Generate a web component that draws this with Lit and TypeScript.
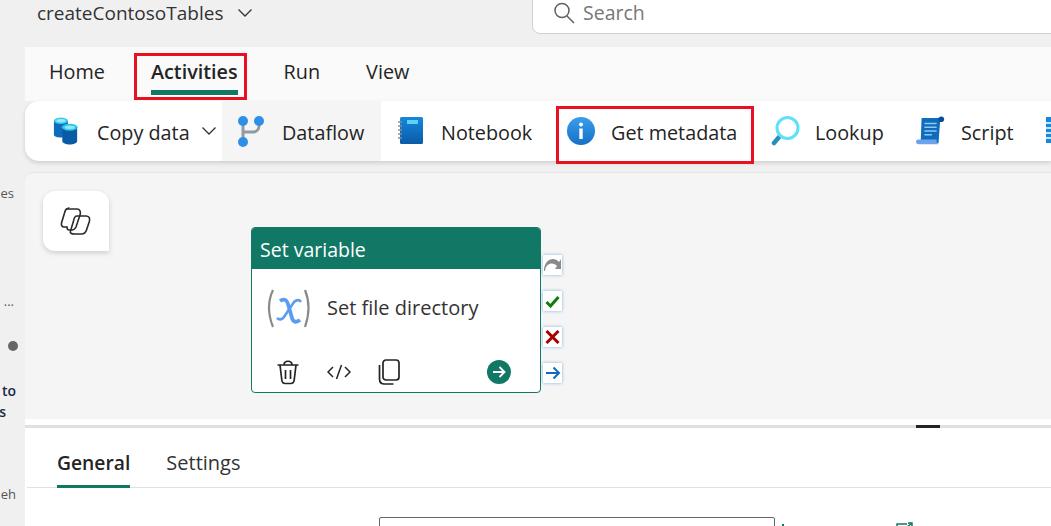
import { LitElement, css, html, svg } from "lit";
import { customElement } from "lit/decorators.js";

const icons = {
  copy: svg`<svg width="26" height="30" viewBox="0 0 28 32">
    <path d="M1 5v15c0 2 4 3 7 3s8-1 8-3V5z" fill="#0f6cbd"/><ellipse cx="8.500" cy="5" rx="7.500" ry="3.500" fill="#3ccbf4"/><ellipse cx="8.500" cy="5" rx="5" ry="1.800" fill="#9be8fa"/>
    <path d="M10 12v15c0 2 4 3.500 8 3.500s8-1.500 8-3.500V12z" fill="#0a5ba6"/><ellipse cx="18" cy="12" rx="8.500" ry="3.800" fill="#2fc4ea"/><ellipse cx="18" cy="12" rx="5.500" ry="2" fill="#8fe6f8"/>
  </svg>`,
  flow: svg`<svg width="26" height="31" viewBox="0 0 26 31">
    <path d="M5 5v21M21 8v2c0 4-3 6-6 6H5" fill="none" stroke="#8f9aa3" stroke-width="3"/>
    <circle cx="5" cy="5" r="5" fill="#2f8fe8"/><circle cx="21" cy="5" r="5" fill="#2f8fe8"/><circle cx="5" cy="26" r="5" fill="#2f8fe8"/>
  </svg>`,
  book: svg`<svg width="26" height="30" viewBox="0 0 26 30">
    <defs><linearGradient id="b" x1="0" y1="0" x2="0" y2="1"><stop offset="0" stop-color="#1a86dc"/><stop offset="1" stop-color="#0a5ba6"/></linearGradient></defs>
    <rect x="2" y="1" width="23" height="27" rx="1.500" fill="url(#b)"/>
    <rect x="9" y="4" width="11" height="4" fill="#5ad4f6"/>
    <path d="M0 6h4M0 10h4M0 14h4M0 18h4M0 22h4" stroke="#8a8f96" stroke-width="1.500"/>
  </svg>`,
  info: svg`<svg width="28" height="28" viewBox="0 0 28 28">
    <defs><linearGradient id="i" x1="0" y1="0" x2="0" y2="1"><stop offset="0" stop-color="#3a9eea"/><stop offset="1" stop-color="#1570c8"/></linearGradient></defs>
    <circle cx="14" cy="14" r="14" fill="url(#i)"/><circle cx="14" cy="7.500" r="2" fill="#fff"/><rect x="12.300" y="11.500" width="3.400" height="10.500" fill="#fff"/>
  </svg>`,
  lens: svg`<svg width="29" height="30" viewBox="0 0 29 30">
    <path d="M9 20L3 27" stroke="#2a8fb8" stroke-width="4.500" stroke-linecap="round"/>
    <circle cx="16.500" cy="12" r="10.500" fill="#fff" stroke="#5fe0fb" stroke-width="3"/>
  </svg>`,
  script: svg`<svg width="31" height="30" viewBox="0 0 31 32">
    <path d="M6 2h20l-2 27H5z" fill="#0f6cbd"/><circle cx="27" cy="3.500" r="3" fill="#0a4f96"/>
    <path d="M9 8h13M9 12h13M9 16h13M9 20h8" stroke="#8cc8f2" stroke-width="1.500"/>
    <path d="M2 25h20c0 1 0 5 2 5H3c-2 0-3-1-3-2.500S1 25 2 25z" fill="#6ba4ec"/>
  </svg>`,
  pipeline: svg`<svg width="20" height="30" viewBox="0 0 20 30">
    <rect width="20" height="26" y="1" fill="#1a86dc"/><path d="M0 7h20M0 12h20M0 17h20M0 22h20" stroke="#bfe6fb" stroke-width="2"/>
  </svg>`,
  copilot: svg`<svg width="50" height="35" viewBox="0 0 50 35" fill="none" stroke="#2a2a2a" stroke-width="1.600">
    <path d="M16 5h10c3 0 4 3 3 6l-4 12c-1 2-2 3-4 3h-3c-1 0-2-1-2-3h-3c-2 0-3-2-2.500-4l3-10c.6-3 1-4 3-4.500z"/>
    <path d="M26 12h9c3 0 4 2 3.500 5l-3 9c-.7 2-2 4-5 4h-7c-3 0-5-1-4-3l3-10c.5-3 2-5 3.500-5z"/>
  </svg>`,
  variable: svg`<svg width="65" height="55" viewBox="0 0 65 55" fill="none">
    <path d="M15 10Q7 27 15 47M47 10Q54 27 47 47" stroke="#8a8a8a" stroke-width="2.200"/>
    <path d="M22 21c4-3 7-1 8 3l4 14c1 4 4 5 8 2" stroke="#5a9cf0" stroke-width="3.800"/>
    <path d="M43 22c-2-3-5-2-7 0L26 37c-2 3-5 3-7 1" stroke="#5a9cf0" stroke-width="2.600"/>
  </svg>`,
  trash: svg`<svg width="24" height="26" viewBox="0 0 24 26" fill="none" stroke="#242424" stroke-width="1.700">
    <path d="M1.500 6h21M8 6c0-5 8-5 8 0M4 6l1.800 15c.2 2 1.500 3.500 3.500 3.500h5.400c2 0 3.300-1.500 3.500-3.500L20 6M9.500 11v9M14.500 11v9"/>
  </svg>`,
  code: svg`<svg width="24" height="16" viewBox="0 0 24 16" fill="none" stroke="#242424" stroke-width="1.500">
    <path d="M6 3L1 8l5 5M18 3l5 5-5 5M14.500 1l-5 14"/>
  </svg>`,
  dup: svg`<svg width="22" height="26" viewBox="0 0 22 26" fill="none" stroke="#242424" stroke-width="1.700">
    <rect x="5" y="1" width="16" height="20" rx="3"/><path d="M1.500 6v14c0 3 2 5 5 5h9"/>
  </svg>`,
  go: svg`<svg width="24" height="24" viewBox="0 0 24 24">
    <circle cx="12" cy="12" r="12" fill="#117865"/><path d="M6 12h11M12.500 7l5 5-5 5" fill="none" stroke="#fff" stroke-width="1.800"/>
  </svg>`,
  skip: svg`<svg width="17" height="14" viewBox="0 0 17 14"><path d="M1 13c1-9 9-9 12-5l-2 3h6V1l-2 3C10-2 0 1 0 13z" fill="#8a8a8a"/></svg>`,
  ok: svg`<svg width="15" height="13" viewBox="0 0 15 13"><path d="M1.500 7l4 4 8-9" fill="none" stroke="#107c10" stroke-width="3"/></svg>`,
  fail: svg`<svg width="15" height="14" viewBox="0 0 15 14"><path d="M1.500 1l12 12M13.500 1l-12 12" fill="none" stroke="#a80000" stroke-width="3"/></svg>`,
  next: svg`<svg width="16" height="14" viewBox="0 0 16 14"><path d="M1 7h13M8.500 1.500L14 7l-5.500 5.500" fill="none" stroke="#0f6cbd" stroke-width="2"/></svg>`,
  chevron: svg`<svg width="16" height="10" viewBox="0 0 16 10"><path d="M1.500 1.500L8 8l6.500-6.500" fill="none" stroke="#333" stroke-width="1.300"/></svg>`,
  search: svg`<svg width="22" height="22" viewBox="0 0 22 22" fill="none" stroke="#616161" stroke-width="1.500"><circle cx="9" cy="8.500" r="7"/><path d="M14 14l7 7"/></svg>`,
  open: svg`<svg width="18" height="10" viewBox="0 0 18 10" fill="none" stroke="#117865" stroke-width="1.500"><path d="M1 10V2h10M10 6l6-5M12 1h4v4"/></svg>`,
};

const tools = [
  { label: "Copy data", icon: icons.copy, cls: "copy" },
  { label: "Dataflow", icon: icons.flow, cls: "flow" },
  { label: "Notebook", icon: icons.book, cls: "book" },
  { label: "Get metadata", icon: icons.info, cls: "meta" },
  { label: "Lookup", icon: icons.lens, cls: "lens" },
  { label: "Script", icon: icons.script, cls: "script" },
  { label: "", icon: icons.pipeline, cls: "last" },
];

/** Pipeline editor page */
@customElement("app-root")
export class AppRoot extends LitElement {
  override render() {
    return html`
      <div class="page">
        <aside class="rail">
          <span class="l1">es</span>
          <span class="l2">...</span>
          <i class="dot"></i>
          <b class="l3">to</b>
          <b class="l4">s</b>
          <span class="l5">eh</span>
        </aside>
        <main>
          <header>
            <div class="title">createContosoTables ${icons.chevron}</div>
            <div class="search">${icons.search}<span>Search</span></div>
          </header>
          <nav>
            <a>Home</a>
            <a class="on">Activities</a>
            <a>Run</a>
            <a>View</a>
          </nav>
          <div class="tools">
            ${tools.map(
              (t) => html`<div class="tool ${t.cls}">
                ${t.icon}<span>${t.label}</span>${t.cls === "copy" ? icons.chevron : ""}
              </div>`
            )}
          </div>
          <section class="canvas">
            <div class="copilot">${icons.copilot}</div>
            <div class="node">
              <div class="node-head">Set variable</div>
              <div class="node-body">
                ${icons.variable}
                <span>Set file directory</span>
              </div>
              <div class="node-foot">
                ${icons.trash}${icons.code}${icons.dup}
                <span class="go">${icons.go}</span>
              </div>
            </div>
            <div class="ports">
              <span>${icons.skip}</span><span>${icons.ok}</span><span>${icons.fail}</span><span>${icons.next}</span>
            </div>
          </section>
          <div class="split"><i></i></div>
          <div class="panel">
            <div class="panel-tabs">
              <a class="on">General</a>
              <a>Settings</a>
            </div>
            <div class="form">
              <div class="input"></div>
              <i class="tick"></i>
              <span class="open">${icons.open}</span>
            </div>
          </div>
        </main>
        <div class="mark mark-a"></div>
        <div class="mark mark-b"></div>
      </div>
    `;
  }

  static override styles = css`
    :host {
      display: block;
      font-family: "Open Sans", "Noto Sans", sans-serif;
      color: #242424;
    }

    .page {
      position: relative;
      display: flex;
      width: 1051px;
      height: 526px;
      overflow: hidden;
      background: #f0f0f0;
    }

    .rail {
      flex: 0 0 25px;
      min-width: 0;
      display: flex;
      flex-direction: column;
      align-items: flex-end;
      padding: 185px 11px 0 0;
      box-sizing: border-box;
      font-size: 13px;
      line-height: 17px;
      color: #555;
    }
    .l2 { margin-top: 91px; }
    .dot {
      flex: none;
      width: 10px;
      height: 10px;
      border-radius: 50%;
      background: #666;
      margin: 31px -4px 0 0;
    }
    .l3 { margin-top: 31px; color: #1b2a4a; font-weight: 600; font-size: 14px; margin-right: -2px; }
    .l4 { margin-top: 4px; margin-right: 8px; color: #1b2a4a; font-weight: 600; font-size: 14px; }
    .l5 { margin-top: 66px; margin-right: -2px; }

    main {
      flex: 1;
      min-width: 0;
      display: flex;
      flex-direction: column;
    }

    header {
      height: 47px;
      flex: none;
      display: flex;
      align-items: flex-start;
    }
    .title {
      width: 507px;
      flex: none;
      box-sizing: border-box;
      padding-left: 12px;
      font-size: 19px;
      line-height: 26px;
      color: #333;
      display: flex;
      align-items: center;
      gap: 14px;
    }
    .search {
      flex: 1;
      height: 35px;
      margin-right: -20px;
      box-sizing: border-box;
      margin-top: -1px;
      padding: 0 0 8px 20px;
      display: flex;
      align-items: center;
      gap: 8px;
      background: #fff;
      border: 1px solid #d1d1d1;
      border-radius: 0 0 0 8px;
      font-size: 19.500px;
      color: #777;
    }

    nav {
      height: 54px;
      flex: none;
      display: flex;
      align-items: flex-start;
      gap: 46px;
      padding-left: 24px;
      background: #fafafa;
      font-size: 19.800px;
      line-height: 50px;
      color: #242424;
    }
    nav a {
      height: 48px;
      box-sizing: border-box;
    }
    nav a.on {
      font-weight: 600;
      border-bottom: 5px solid #117865;
    }

    .tools {
      height: 60px;
      flex: none;
      display: flex;
      background: #fff;
      border-radius: 14px 0 0 14px;
      box-shadow: 0 2px 4px rgba(0, 0, 0, 0.14);
      font-size: 19.800px;
      white-space: nowrap;
      position: relative;
      overflow: hidden;
    }
    .tool {
      display: flex;
      align-items: center;
      gap: 15px;
      flex: none;
      box-sizing: border-box;
    }
    .tool span { padding-top: 2px; }
    .tool.copy { padding: 0 5px 0 28px; width: 197px; gap: 18px; }
    .tool.copy svg:last-child { margin-left: -7px; }
    .tool.flow { background: #f5f5f5; width: 159px; padding-left: 16px; gap: 18px; }
    .tool.book { padding-left: 17px; width: 175px; gap: 17px; }
    .tool.meta { width: 215px; padding-left: 11px; gap: 16px; }
    .tool.lens { width: 144px; }
    .tool.script { width: 131px; }

    .canvas {
      position: relative;
      margin-top: 11px;
      height: 247px;
      flex: none;
      background: #f5f5f5;
      border-radius: 8px 0 0 0;
      border-top: 1px solid #e6e6e6;
      box-sizing: border-box;
    }
    .copilot {
      position: absolute;
      left: 18px;
      top: 18px;
      width: 66px;
      height: 60px;
      display: flex;
      align-items: center;
      justify-content: center;
      background: #fff;
      border-radius: 12px 12px 0 12px;
      box-shadow: 0 2px 5px rgba(0, 0, 0, 0.16);
    }
    .node {
      position: absolute;
      left: 226px;
      top: 54px;
      width: 290px;
      height: 166px;
      box-sizing: border-box;
      display: flex;
      flex-direction: column;
      background: #fff;
      border: 1px solid #117865;
      border-radius: 4px;
      overflow: hidden;
    }
    .node-head {
      height: 41px;
      flex: none;
      padding-left: 8px;
      background: #117865;
      color: #fff;
      font-size: 19.500px;
      line-height: 43px;
    }
    .node-body {
      flex: 1;
      display: flex;
      align-items: center;
      gap: 4px;
      padding: 0 0 6px 6px;
      font-size: 20px;
      color: #333;
    }
    .node-body svg { flex: none; }
    .node-foot {
      height: 40px;
      flex: none;
      display: flex;
      align-items: center;
      gap: 27px;
      padding: 0 29px 0 24px;
    }
    .node-foot .go { margin-left: auto; display: flex; }
    .node-foot svg { flex: none; }

    .ports {
      position: absolute;
      left: 518px;
      top: 82px;
      display: flex;
      flex-direction: column;
      gap: 16px;
    }
    .ports span {
      width: 19px;
      height: 20px;
      box-sizing: border-box;
      display: flex;
      align-items: center;
      justify-content: center;
      background: #fff;
      box-shadow: 0 0 3px rgba(15, 108, 189, 0.5);
    }

    .split {
      flex: none;
      height: 9px;
      background: #fff;
      position: relative;
    }
    .split::after {
      content: "";
      display: block;
      height: 3px;
      margin-top: 6px;
      background: #e0e0e0;
    }
    .split i {
      position: absolute;
      left: 891px;
      top: 6px;
      width: 24px;
      height: 3px;
      background: #242424;
    }

    .panel {
      flex: 1;
      background: #fff;
    }
    .panel-tabs {
      height: 60px;
      box-sizing: border-box;
      margin-left: 2px;
      display: flex;
      gap: 36px;
      padding-left: 30px;
      border-bottom: 1px solid #e0e0e0;
      font-size: 20px;
      line-height: 70px;
      color: #333;
    }
    .panel-tabs a { height: 60px; box-sizing: border-box; }
    .panel-tabs a.on {
      font-size: 19.300px;
      font-weight: 600;
      color: #242424;
      border-bottom: 3px solid #117865;
    }
    .form {
      display: flex;
      align-items: flex-start;
      padding: 29px 0 0 354px;
    }
    .input {
      width: 396px;
      height: 40px;
      box-sizing: border-box;
      border: 1px solid #666;
      border-radius: 2px;
    }
    .tick {
      width: 2px;
      height: 8px;
      margin: 7px 0 0 7px;
      background: #117865;
    }
    .open { display: flex; margin: 5px 0 0 112px; }

    .mark {
      position: absolute;
      box-sizing: border-box;
      border: 3px solid #e81123;
    }
    .mark-a { left: 134px; top: 53px; width: 113px; height: 47px; }
    .mark-b { left: 556px; top: 106px; width: 198px; height: 58px; }
  `;
}

declare global {
  interface HTMLElementTagNameMap {
    "app-root": AppRoot;
  }
}
